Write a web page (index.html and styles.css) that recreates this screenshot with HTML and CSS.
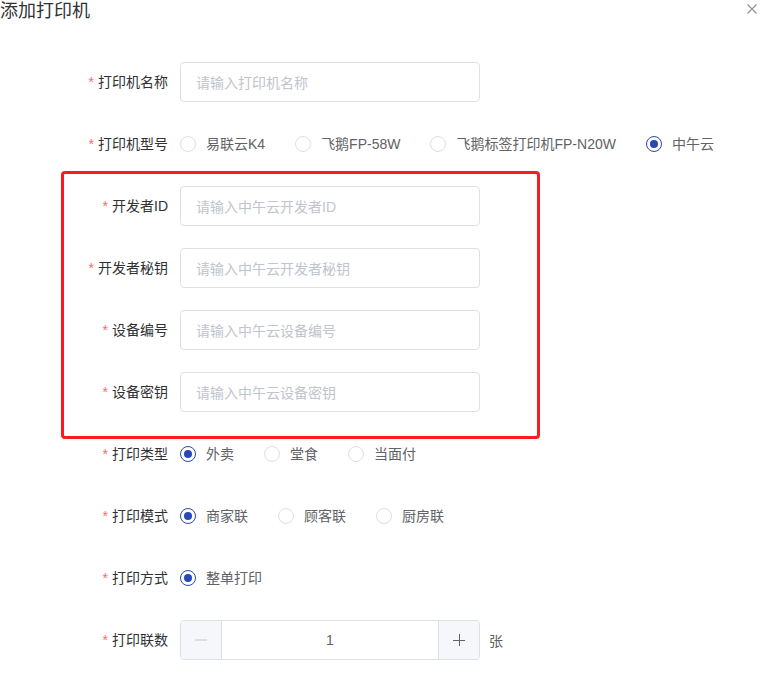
FILE: index.html
```html
<!DOCTYPE html>
<html lang="zh-CN">
<head>
<meta charset="utf-8">
<title>添加打印机</title>
<link rel="stylesheet" href="styles.css">
</head>
<body>
<div class="dialog">
  <div class="header">
    <span class="title">添加打印机</span>
    <button class="close" aria-label="关闭">
      <svg width="10" height="10" viewBox="0 0 10 10"><path d="M0.5 0.5L9.5 9.5M9.5 0.5L0.5 9.5" stroke="#909399" stroke-width="1.2" fill="none"/></svg>
    </button>
  </div>
  <form class="form">
    <div class="item">
      <label class="label"><span class="req">*</span>打印机名称</label>
      <div class="content"><div class="input"><span class="ph">请输入打印机名称</span></div></div>
    </div>
    <div class="item">
      <label class="label"><span class="req">*</span>打印机型号</label>
      <div class="content radios">
        <span class="radio"><span class="circle"></span><span class="rl">易联云K4</span></span>
        <span class="radio"><span class="circle"></span><span class="rl">飞鹅FP-58W</span></span>
        <span class="radio"><span class="circle"></span><span class="rl">飞鹅标签打印机FP-N20W</span></span>
        <span class="radio on"><span class="circle"></span><span class="rl">中午云</span></span>
      </div>
    </div>
    <div class="item">
      <label class="label"><span class="req">*</span>开发者ID</label>
      <div class="content"><div class="input"><span class="ph">请输入中午云开发者ID</span></div></div>
    </div>
    <div class="item">
      <label class="label"><span class="req">*</span>开发者秘钥</label>
      <div class="content"><div class="input"><span class="ph">请输入中午云开发者秘钥</span></div></div>
    </div>
    <div class="item">
      <label class="label"><span class="req">*</span>设备编号</label>
      <div class="content"><div class="input"><span class="ph">请输入中午云设备编号</span></div></div>
    </div>
    <div class="item">
      <label class="label"><span class="req">*</span>设备密钥</label>
      <div class="content"><div class="input"><span class="ph">请输入中午云设备密钥</span></div></div>
    </div>
    <div class="item">
      <label class="label"><span class="req">*</span>打印类型</label>
      <div class="content radios">
        <span class="radio on"><span class="circle"></span><span class="rl">外卖</span></span>
        <span class="radio"><span class="circle"></span><span class="rl">堂食</span></span>
        <span class="radio"><span class="circle"></span><span class="rl">当面付</span></span>
      </div>
    </div>
    <div class="item">
      <label class="label"><span class="req">*</span>打印模式</label>
      <div class="content radios">
        <span class="radio on"><span class="circle"></span><span class="rl">商家联</span></span>
        <span class="radio"><span class="circle"></span><span class="rl">顾客联</span></span>
        <span class="radio"><span class="circle"></span><span class="rl">厨房联</span></span>
      </div>
    </div>
    <div class="item">
      <label class="label"><span class="req">*</span>打印方式</label>
      <div class="content radios">
        <span class="radio on"><span class="circle"></span><span class="rl">整单打印</span></span>
      </div>
    </div>
    <div class="item">
      <label class="label"><span class="req">*</span>打印联数</label>
      <div class="content">
        <div class="number">
          <span class="btn minus"><svg width="12" height="12" viewBox="0 0 12 12"><path d="M0 6H12" stroke="#c0c4cc" stroke-width="1"/></svg></span>
          <span class="val">1</span>
          <span class="btn plus"><svg width="12" height="12" viewBox="0 0 12 12"><path d="M0 6.5H12M6.5 0V12" stroke="#606266" stroke-width="1"/></svg></span>
        </div>
        <span class="unit">张</span>
      </div>
    </div>
  </form>
  <div class="mark"></div>
</div>
</body>
</html>
```
FILE: styles.css
```css
html, body {
  margin: 0;
  padding: 0;
  background: #fff;
}
body {
  font-family: "Liberation Sans", "Noto Sans CJK SC", sans-serif;
  font-size: 14px;
  color: #606266;
}
.dialog {
  position: relative;
  width: 762px;
  height: 698px;
  overflow: hidden;
}
.header {
  display: flex;
  justify-content: space-between;
  align-items: flex-start;
  height: 24px;
}
.title {
  font-size: 18px;
  line-height: 22px;
  color: #303133;
}
.close {
  border: 0;
  background: none;
  padding: 0;
  margin: 4px 5px 0 0;
  width: 10px;
  height: 10px;
  display: flex;
}
.form {
  margin: 38px 0 0 0;
}
.item {
  display: flex;
  align-items: center;
  height: 40px;
  margin-bottom: 22px;
}
.label {
  width: 180px;
  box-sizing: border-box;
  padding-right: 12px;
  text-align: right;
  line-height: 40px;
  color: #303133;
}
.req {
  color: #f56c6c;
  margin-right: 4px;
}
.content {
  display: flex;
  align-items: center;
}
.input {
  width: 300px;
  height: 40px;
  box-sizing: border-box;
  border: 1px solid #dcdfe6;
  border-radius: 4px;
  padding: 0 15px;
  display: flex;
  align-items: center;
}
.ph {
  color: #c0c4cc;
}
.radio {
  display: inline-flex;
  align-items: center;
  margin-right: 30px;
  line-height: 1;
}
.circle {
  width: 16px;
  height: 16px;
  box-sizing: border-box;
  border: 1px solid #dcdfe6;
  border-radius: 50%;
  position: relative;
}
.radio.on .circle {
  border: 1.5px solid #2848b8;
}
.radio.on .circle::after {
  content: "";
  position: absolute;
  left: 50%;
  top: 50%;
  width: 8px;
  height: 8px;
  margin: -4px 0 0 -4px;
  border-radius: 50%;
  background: #2848b8;
}
.rl {
  padding-left: 10px;
  color: #606266;
}
.number {
  width: 300px;
  height: 40px;
  box-sizing: border-box;
  border: 1px solid #dcdfe6;
  border-radius: 4px;
  display: flex;
}
.btn {
  width: 40px;
  background: #f5f7fa;
  display: flex;
  align-items: center;
  justify-content: center;
}
.minus {
  border-right: 1px solid #dcdfe6;
  border-radius: 4px 0 0 4px;
}
.plus {
  border-left: 1px solid #dcdfe6;
  border-radius: 0 4px 4px 0;
}
.val {
  flex: 1;
  display: flex;
  align-items: center;
  justify-content: center;
  color: #606266;
}
.unit {
  margin-left: 9px;
  color: #606266;
}
.mark {
  position: absolute;
  left: 61px;
  top: 171px;
  width: 479px;
  height: 268px;
  box-sizing: border-box;
  border: 3px solid #fb1b1b;
  border-radius: 4px;
  pointer-events: none;
}
```
